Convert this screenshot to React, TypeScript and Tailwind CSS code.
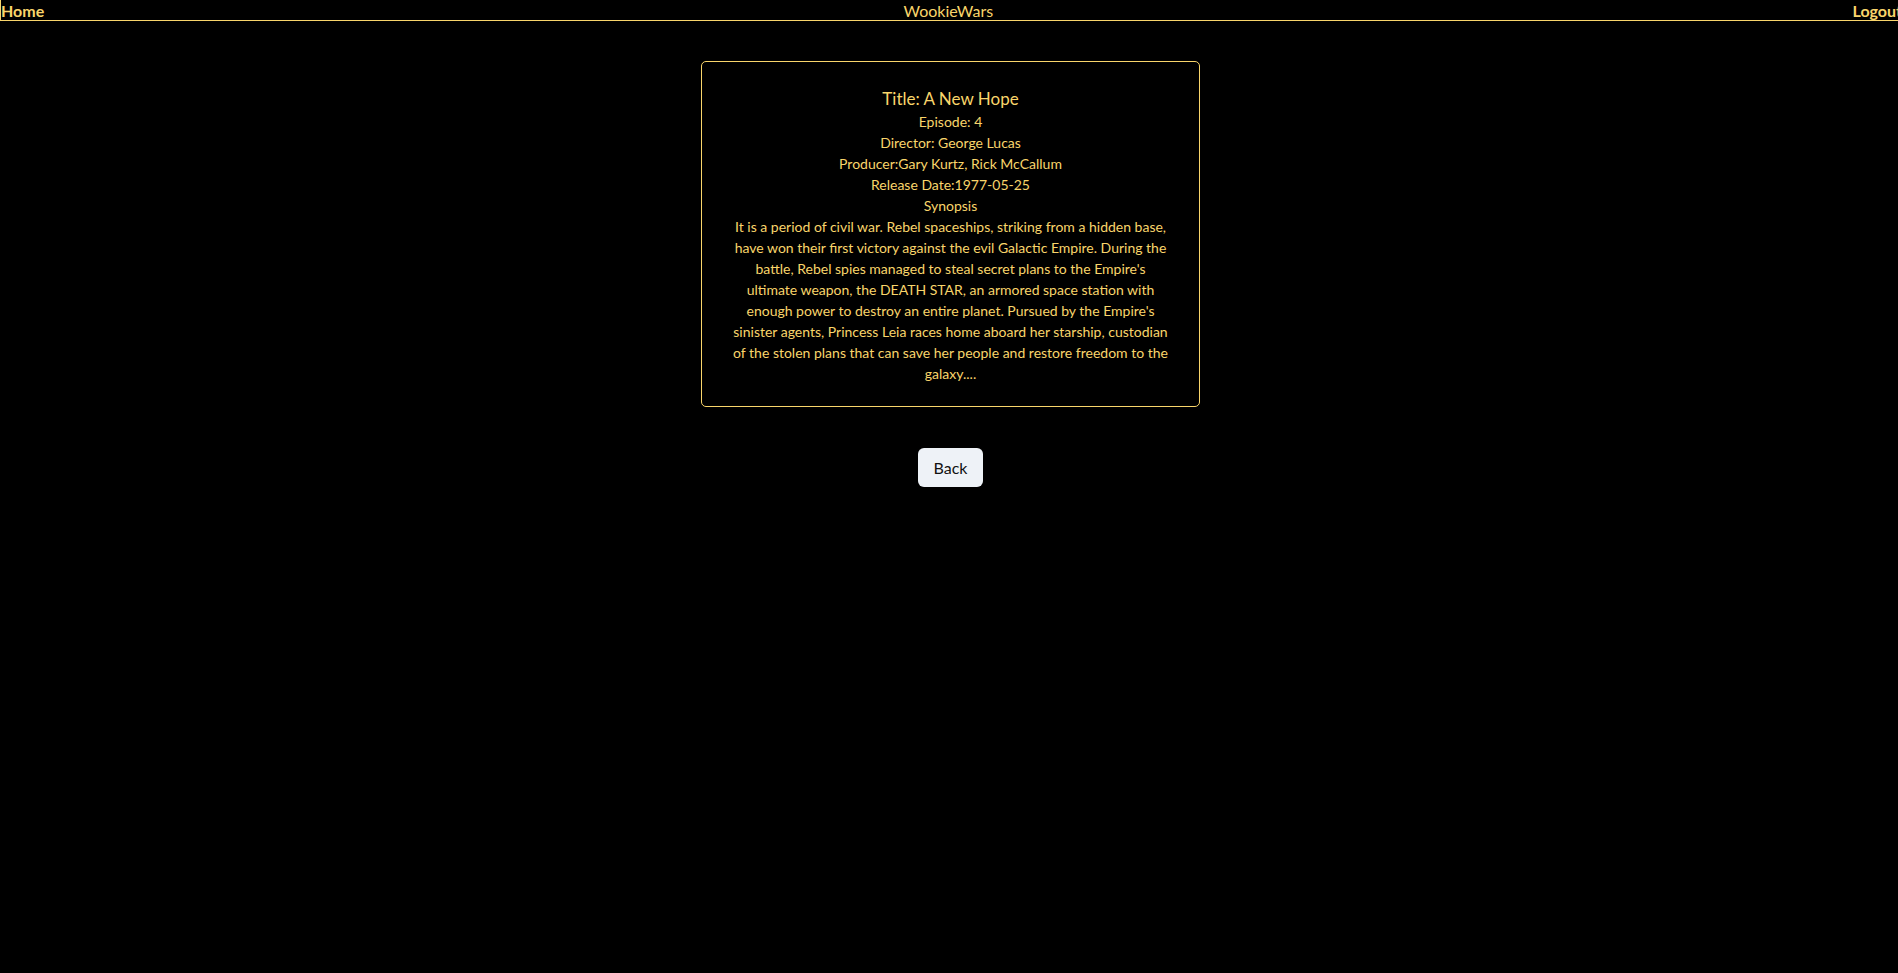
const yellow = "text-[#f9d56b]";

const film = {
  title: "A New Hope",
  episode: 4,
  director: "George Lucas",
  producer: "Gary Kurtz, Rick McCallum",
  release: "1977-05-25",
  crawl:
    "It is a period of civil war. Rebel spaceships, striking from a hidden base, have won their first victory against the evil Galactic Empire. During the battle, Rebel spies managed to steal secret plans to the Empire's ultimate weapon, the DEATH STAR, an armored space station with enough power to destroy an entire planet. Pursued by the Empire's sinister agents, Princess Leia races home aboard her starship, custodian of the stolen plans that can save her people and restore freedom to the galaxy....",
};

const NavBar = () => (
  <div className="w-full overflow-hidden">
    <div className="flex w-[calc(100%+5px)] h-[21px] border border-t-0 border-[#f9d56b] justify-between items-center text-[16px] leading-[19px]">
      <a href="#" className={`font-bold ${yellow}`}>
        Home
      </a>
      <span className={yellow}>WookieWars</span>
      <a href="#" className={`font-bold ${yellow}`}>
        Logout
      </a>
    </div>
  </div>
);

const App = () => (
  <div
    className="min-h-screen w-full bg-black"
    style={{ fontFamily: "Lato, 'Open Sans', sans-serif" }}
  >
    <NavBar />
    <div className="flex flex-col items-center pl-[3px]">
      <div
        className={`mt-[40px] w-[499px] h-[346px] border border-[#f9d56b] rounded-[5px] px-[29px] pt-[25px] text-center ${yellow}`}
      >
        <h2 className="text-[17px] leading-[24px]">Title: {film.title}</h2>
        <p className="text-[14px] leading-[21px]">Episode: {film.episode}</p>
        <p className="text-[14px] leading-[21px]">Director: {film.director}</p>
        <p className="text-[14px] leading-[21px]">Producer:{film.producer}</p>
        <p className="text-[14px] leading-[21px]">Release Date:{film.release}</p>
        <p className="text-[14px] leading-[21px]">Synopsis</p>
        <p className="text-[14px] leading-[21px]">{film.crawl}</p>
      </div>
      <button className="mt-[41px] h-[39px] w-[65px] rounded-[6px] bg-[#eef2f7] text-[16px] text-[#111]">
        Back
      </button>
    </div>
  </div>
);

export default App;
